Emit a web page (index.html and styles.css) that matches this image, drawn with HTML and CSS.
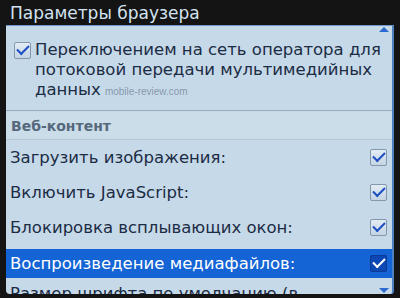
FILE: index.html
```html
<!DOCTYPE html>
<html lang="ru">
<head>
    <meta charset="UTF-8">
    <meta name="viewport" content="width=device-width, initial-scale=1.0">
    <title>Параметры браузера</title>
    <link rel="stylesheet" href="styles.css">
</head>
<body>
    <div class="screen">
        <div class="title">Параметры браузера</div>
        <div class="panel">
            <span class="arrow arrow-up"></span>
            <div class="option-block">
                <span class="check"></span>
                <div class="option-text">Переключением на сеть оператора для потоковой передачи мультимедийных данных<span class="watermark">mobile-review.com</span></div>
            </div>
            <div class="section">Веб-контент</div>
            <div class="row">
                <span class="row-label">Загрузить изображения:</span>
                <span class="check"></span>
            </div>
            <div class="row">
                <span class="row-label">Включить JavaScript:</span>
                <span class="check"></span>
            </div>
            <div class="row">
                <span class="row-label">Блокировка всплывающих окон:</span>
                <span class="check"></span>
            </div>
            <div class="row selected">
                <span class="row-label">Воспроизведение медиафайлов:</span>
                <span class="check"></span>
            </div>
            <div class="row last">
                <span class="row-label">Размер шрифта по умолчанию (в</span>
            </div>
            <span class="arrow arrow-down"></span>
        </div>
    </div>
</body>
</html>
```

FILE: styles.css
```css
:root {
    --bezel: #141414;
    --panel-bg: #c6d9e8;
    --text-color: #1b2c44;
    --section-color: #56687c;
    --line-color: #98adc0;
    --select-bg: #1464d6;
    --check-color: #1d4fc4;
}

html, body {
    margin: 0;
    padding: 0;
    background-color: var(--bezel);
}

body {
    font-family: "DejaVu Sans", sans-serif;
    width: 400px;
    height: 298px;
    overflow: hidden;
}

.screen {
    display: flex;
    flex-direction: column;
    height: 298px;
}

.title {
    height: 24px;
    padding-left: 10px;
    color: #d3e3f1;
    font-size: 17px;
    line-height: 26px;
    flex-shrink: 0;
}

.panel {
    position: relative;
    margin: 1px 6px 0 6px;
    background-color: var(--panel-bg);
    border-right: 2px solid #4d80c0;
    border-top: 1px solid #6d95c6;
    height: 268px;
    overflow: hidden;
    border-radius: 0 0 3px 4px;
    flex-shrink: 0;
}

.arrow {
    position: absolute;
    right: 3px;
    width: 0;
    height: 0;
    border-left: 5px solid transparent;
    border-right: 5px solid transparent;
}

.arrow-up {
    top: 1px;
    border-bottom: 5px solid #2c6ad0;
}

.arrow-down {
    bottom: 1px;
    border-top: 5px solid #2c6ad0;
}

.option-block {
    display: flex;
    gap: 4px;
    padding: 14px 2px 8px 8px;
    border-bottom: 1px solid var(--line-color);
}

.option-block .check {
    margin-top: 2px;
}

.option-text {
    font-size: 16.5px;
    line-height: 20px;
    color: var(--text-color);
}

.watermark {
    margin-left: 4px;
    font-size: 10px;
    color: rgba(110, 130, 150, 0.75);
    font-family: "Liberation Sans", sans-serif;
}

.section {
    height: 27px;
    line-height: 29px;
    padding-left: 5px;
    margin-top: 1px;
    font-size: 14px;
    font-weight: bold;
    color: var(--section-color);
    background-color: #cbdde9;
    border-bottom: 1px solid #b4c7d6;
}

.row {
    display: flex;
    align-items: center;
    justify-content: space-between;
    height: 35px;
    padding: 0 5px 0 4px;
    font-size: 16.5px;
    color: var(--text-color);
    flex-shrink: 0;
}

.row.selected {
    height: 29px;
    margin-top: 4px;
    background-color: var(--select-bg);
    color: #ffffff;
}

.row.last {
    height: 31px;
    white-space: nowrap;
}

.check {
    position: relative;
    width: 15px;
    height: 15px;
    flex-shrink: 0;
    border: 1px solid #8397ad;
    border-radius: 2px;
    background: linear-gradient(#e3ecf4, #c4d4e2);
}

.check::after {
    content: "";
    position: absolute;
    left: 2px;
    top: 2px;
    width: 10px;
    height: 5px;
    border-left: 2px solid var(--check-color);
    border-bottom: 2px solid var(--check-color);
    transform: rotate(-45deg);
}

.selected .check {
    background: #0d47b4;
    border-color: #0a3a96;
}

.selected .check::after {
    border-color: #ffffff;
}
```
